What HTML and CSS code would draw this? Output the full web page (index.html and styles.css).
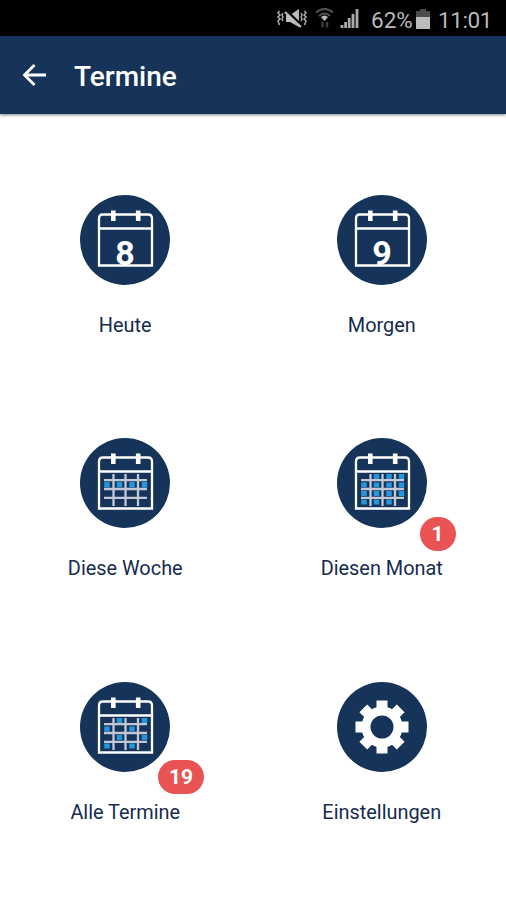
FILE: index.html
```html
<!DOCTYPE html>
<html lang="de">
<head>
<meta charset="utf-8">
<title>Termine</title>
<link rel="stylesheet" href="styles.css">
</head>
<body>
<svg class="defs" width="0" height="0">
  <defs>
    <g id="calendar">
      <circle cx="45" cy="45" r="45" fill="#163459"/>
      <path d="M19 70.500V23.500q0-4 4-4h45q4 0 4 4v47z" fill="none" stroke="#fff" stroke-width="2.300"/>
      <path d="M19 33.500h53" stroke="#fff" stroke-width="2.300"/>
      <path d="M33.300 15.500v10.500M58.200 15.500v10.500" stroke="#fff" stroke-width="4.600"/>
    </g>
    <path id="grid" d="M24 42.200h43M24 51h43M24 59.800h43M33.500 36v32M45.500 36v32M58 36v32" fill="none" stroke="#c3c8d6" stroke-width="2.300"/>
  </defs>
</svg>
<header class="status">
  <svg class="status-icons" width="90" height="30" viewBox="0 0 90 30">
    <g fill="none" stroke="#aaa" stroke-width="1.500">
      <path d="M5.500 7l-1.500 2 2 2-2 2 2 2-2 2 1.500 4M9 9l-1 2 1 2-1 2 1 2M30.500 7l1.500 2-2 2 2 2-2 2 2 2-1.500 4M27 9l1 2-1 2 1 2-1 2"/>
    </g>
    <path d="M12 11h4l9-6v18l-9-5h-4z" fill="#bbb"/>
    <path d="M12 6l16 16" stroke="#000" stroke-width="2.500"/>
    <path d="M11 8l16 15" stroke="#bbb" stroke-width="2"/>
    <path d="M42 8.500q8.500-7 17 0M45 12q5.500-5 11 0" fill="none" stroke="#555" stroke-width="1.800"/>
    <path d="M47 13q3.500-3 7 0l-3.500 4z" fill="#bbb"/>
    <path d="M48.500 18v5.500M53 18v5.500" stroke="#3c3c3c" stroke-width="2.500"/>
    <path d="M68 24v-3M71.600 24v-6M75.200 24v-10M79 24v-14M83 24v-19" stroke="#aaa" stroke-width="2.800"/>
  </svg>
  <span class="percent">62%</span>
  <svg class="battery" width="14" height="20" viewBox="0 0 14 20"><path d="M4 0h6v2h4v6H0V2h4z" fill="#4b4b4b"/><path d="M0 8h14v12H0z" fill="#bbb"/></svg>
  <time class="clock">11:01</time>
</header>
<nav class="toolbar">
  <svg class="back" width="24" height="24" viewBox="0 0 24 24"><path d="M12.500 2L2.500 12l10 10M2.500 12H24" fill="none" stroke="#fff" stroke-width="2.800"/></svg>
  <h1 class="title">Termine</h1>
</nav>
<main class="tiles">
  <a class="tile">
    <svg class="icon" viewBox="0 0 90 90"><use href="#calendar"/><text class="digit" x="45" y="69.500">8</text></svg>
    <span class="label">Heute</span>
  </a>
  <a class="tile">
    <svg class="icon" viewBox="0 0 90 90"><use href="#calendar"/><text class="digit" x="45" y="69.500">9</text></svg>
    <span class="label">Morgen</span>
  </a>
  <a class="tile">
    <svg class="icon" viewBox="0 0 90 90"><use href="#calendar"/><use href="#grid"/>
      <path class="days" d="M27 44v5.500M39.500 44v5.500M52 44v5.500M64.500 44v5.500"/></svg>
    <span class="label">Diese Woche</span>
  </a>
  <a class="tile">
    <svg class="icon" viewBox="0 0 90 90"><use href="#calendar"/><use href="#grid"/>
      <path class="days" d="M39.500 36v5M52 36v5M64.500 36v5M27 44.500v5M39.500 44.500v5M52 44.500v5M64.500 44.500v5M27 53v5M39.500 53v5M52 53v5M64.500 53v5M27 61.500v5M39.500 61.500v5M52 61.500v5"/></svg>
    <span class="badge badge-single">1</span>
    <span class="label">Diesen Monat</span>
  </a>
  <a class="tile">
    <svg class="icon" viewBox="0 0 90 90"><use href="#calendar"/><use href="#grid"/>
      <path class="days" d="M39.500 36v5M64.500 36v5M27 44.500v5M52 44.500v5M39.500 53v5M64.500 53v5M27 61.500v5M52 61.500v5"/></svg>
    <span class="badge">19</span>
    <span class="label">Alle Termine</span>
  </a>
  <a class="tile">
    <svg class="icon" viewBox="0 0 90 90">
      <circle cx="45" cy="45" r="45" fill="#163459"/>
      <g stroke="#fff" stroke-width="11" fill="none">
        <path d="M45 18.500v12M45 59.500v12M18.500 45h12M59.500 45h12M26.300 26.300l8 8M55.700 55.700l8 8M26.300 63.700l8-8M55.700 34.300l8-8"/>
        <circle cx="45" cy="45" r="16" stroke-width="9"/>
      </g>
    </svg>
    <span class="label">Einstellungen</span>
  </a>
</main>
</body>
</html>
```
FILE: styles.css
```css
body { margin: 0; background: #fff; font-family: Roboto, "Liberation Sans", sans-serif; }
.defs { position: absolute; }
.status { height: 36px; background: #000; color: #b9b9b9; display: flex; align-items: center; padding: 0 14px 0 274px; box-sizing: border-box; font-size: 22.500px; white-space: nowrap; }
.status-icons { flex: none; margin-top: 2px; }
.percent { margin-left: 7px; width: 42px; padding-top: 3px; }
.battery { flex: none; margin-left: 3px; margin-top: 1px; }
.clock { margin-left: auto; padding-top: 3px; letter-spacing: -.4px; }
.toolbar { height: 78px; box-sizing: border-box; background: #163459; display: flex; align-items: center; padding-left: 22px; box-shadow: 0 1px 3px rgba(0,0,0,.5); }
.back { margin-top: -1px; }
.title { margin: 3px 0 0 28px; color: #fff; font-size: 28px; font-weight: 500; line-height: 32px; }
.tiles { display: grid; grid-template-columns: 240.500px 240.500px; grid-auto-rows: 243.300px; align-content: start; column-gap: 16px; padding: 81px 0 0 5px; min-height: 783px; box-sizing: border-box; }
.tile { position: relative; display: flex; flex-direction: column; align-items: center; color: #152b50; }
.icon { width: 90px; height: 90px; }
.label { margin-top: 29px; font-size: 19.900px; line-height: 24px; }
.digit { fill: #fff; font: 700 34px Roboto, sans-serif; text-anchor: middle; }
.days { fill: none; stroke: #2596dc; stroke-width: 5.500px; }
.badge { position: absolute; left: 153px; top: 78.600px; width: 46px; height: 34px; border-radius: 17px; background: #e95354; color: #fff; font-size: 21px; font-weight: 700; line-height: 34px; text-align: center; }
.badge-single { left: 158px; width: 36px; }
```
